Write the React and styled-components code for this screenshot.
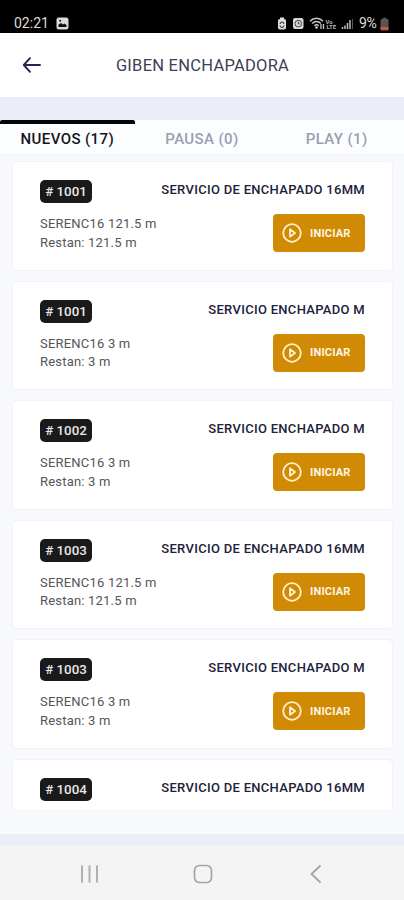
import React from 'react';
import styled, {createGlobalStyle} from 'styled-components';

const GlobalStyle = createGlobalStyle`
    * {
        box-sizing: border-box;
    }

    body {
        margin: 0;
        font-family: Roboto, "Liberation Sans", sans-serif;
    }
`;

const Screen = styled.div`
    display: flex;
    flex-direction: column;
    width: 404px;
    height: 900px;
    overflow: hidden;
    background: #f7f9fd;
`;

const StatusBar = styled.div`
    display: flex;
    flex: none;
    align-items: flex-end;
    justify-content: space-between;
    height: 33px;
    padding: 0 15px 2px 14px;
    background: #000;
    color: #dcdcdc;
`;

const StatusGroup = styled.div`
    display: flex;
    align-items: center;
    height: 15px;
`;

const Clock = styled.span`
    width: 42px;
    font-size: 14px;
    line-height: 15px;
    white-space: nowrap;
`;

const Battery = styled.span`
    margin: 0 2px 0 5px;
    width: 19px;
    font-size: 14px;
    line-height: 15px;
    letter-spacing: -0.4px;
`;

const Header = styled.header`
    display: grid;
    flex: none;
    grid-template-columns: 64px 1fr 64px;
    align-items: center;
    height: 64px;
    background: #fff;
`;

const Back = styled.button`
    display: flex;
    padding: 0 0 0 22px;
    border: 0;
    background: none;
`;

const Heading = styled.h1`
    margin: 0;
    padding: 2px 0 0 1px;
    color: #3d3f56;
    font-size: 16.5px;
    font-weight: 400;
    letter-spacing: 0.25px;
    line-height: 20px;
    text-align: center;
    white-space: nowrap;
`;

const Band = styled.div`
    flex: none;
    height: ${props => props.$height}px;
    background: #ebeef7;
`;

const Tabs = styled.nav`
    display: grid;
    flex: none;
    grid-template-columns: repeat(3, 1fr);
    height: 35px;
    background: #fcfdff;
    border-bottom: 1px solid #f1f3f7;
`;

const Tab = styled.div`
    display: flex;
    justify-content: center;
    padding-top: 5px;
    border-top: 4px solid ${props => props.$active ? '#050507' : 'transparent'};
    border-radius: 2px;
    color: ${props => props.$active ? '#15151c' : '#9a9eb1'};
    font-size: 15px;
    font-weight: 500;
    letter-spacing: 0.4px;
    line-height: 20px;
    white-space: nowrap;
`;

const List = styled.main`
    display: flex;
    flex: none;
    flex-direction: column;
    gap: 10px;
    height: 654px;
    padding: 6px 11px 0 12px;
    overflow: hidden;
`;

const Card = styled.article`
    display: flex;
    flex: none;
    flex-direction: column;
    height: 109.5px;
    padding: 18px 27px 0;
    border: 1px solid #f0f2f6;
    border-radius: 4px;
    background: #fff;
`;

const Row = styled.div`
    display: flex;
    justify-content: space-between;
`;

const Id = styled.span`
    width: 52px;
    height: 23px;
    border-radius: 5px;
    background: #1a1a1b;
    color: #e8e8e8;
    font-size: 13.3px;
    font-weight: 500;
    line-height: 24px;
    text-align: center;
    white-space: nowrap;
`;

const Name = styled.span`
    color: #20223a;
    font-size: 13px;
    font-weight: 500;
    letter-spacing: 0.3px;
    line-height: 20px;
    white-space: nowrap;
`;

const Details = styled.div`
    padding-top: 12px;
    color: #54555a;
    font-size: 13px;
    letter-spacing: 0.2px;
    line-height: 18.5px;
    white-space: nowrap;
`;

const StartButton = styled.button`
    display: flex;
    align-items: center;
    gap: 8px;
    width: 92px;
    height: 38px;
    margin-top: 11px;
    padding: 0 0 0 9px;
    border: 0;
    border-radius: 4px;
    background: #d18a04;
    color: #fff5e2;
    font-family: inherit;
    font-size: 11px;
    font-weight: 700;
    letter-spacing: 0.2px;
`;

const Spacer = styled.div`
    flex: 1;
`;

const NavBar = styled.footer`
    display: grid;
    flex: none;
    grid-template-columns: 113px 113px 114px;
    align-items: center;
    justify-content: center;
    justify-items: center;
    height: 54px;
    padding: 2px 0 0 2px;
    background: #f4f4f4;
`;

const PictureIcon = () => (
    <svg width="13" height="13" viewBox="0 0 13 13">
        <rect x="0.5" y="0.5" width="12" height="12" rx="2.5" fill="#dcdcdc"/>
        <path d="M2.5 10V7.6L5 6l2 1.6 1.6-1 2 1.6V10z" fill="#111"/>
        <circle cx="4.2" cy="3.8" r="1" fill="#111"/>
    </svg>
);

const StatusIcons = () => (
    <svg width="77" height="15" viewBox="0 0 77 15">
        {/* battery saver */}
        <path d="M3 3V1.5h4V3c1.5 0 2 .8 2 2v6.5c0 1.3-.6 2-2 2H3c-1.4 0-2-.7-2-2V5c0-1.2.6-2 2-2z" fill="#ddd"/>
        <path d="M3 8a2 2 0 0 1 4 0M7 9.5a2 2 0 0 1-4 0" fill="none" stroke="#222" strokeWidth="1"/>
        {/* alarm */}
        <rect x="16" y="2" width="10.5" height="11" rx="2" fill="#d8d8d8"/>
        <circle cx="21.3" cy="7.6" r="3.3" fill="none" stroke="#333" strokeWidth="0.9"/>
        <path d="M21.3 5.8v2h1.5" fill="none" stroke="#333" strokeWidth="0.9"/>
        {/* wifi */}
        <g fill="none" stroke="#c8c8c8" strokeWidth="1.4">
            <path d="M33 5.2c3.8-3.9 9.2-3.9 13 0"/>
            <path d="M35.2 7.5c2.500-2.600 6.100-2.600 8.600 0"/>
            <path d="M37.3 9.800c1.300-1.300 3.100-1.300 4.400 0"/>
        </g>
        <circle cx="39.5" cy="11.5" r="1.3" fill="#d0d0d0"/>
        <path d="M44 13V8M46.5 8v5" stroke="#c8c8c8" strokeWidth="1.3"/>
        <text x="48.5" y="7.6" fill="#b4b4b4" fontSize="6" fontWeight="700">Vo</text>
        <text x="49.5" y="13" fill="#b4b4b4" fontSize="6" fontWeight="700">LTE</text>
        {/* signal */}
        <path d="M65.5 13v-2M68 13V9.500M70.5 13V7M73 13V4" stroke="#bdbdbd" strokeWidth="1.5"/>
        <path d="M75.5 13V3" stroke="#555" strokeWidth="1"/>
    </svg>
);

const BatteryIcon = () => (
    <svg width="9" height="14" viewBox="0 0 9 14">
        <path d="M2.8 2V.8h3.4V2H7c1 0 1.5.5 1.5 1.5v8.300c0 1-.5 1.5-1.5 1.5H2c-1 0-1.5-.5-1.5-1.5V3.500C.5 2.500 1 2 2 2z" fill="#555"/>
        <path d="M.5 10h8v1.800c0 1-.5 1.500-1.500 1.500H2c-1 0-1.500-.5-1.500-1.500z" fill="#c9553d"/>
    </svg>
);

const ArrowIcon = () => (
    <svg width="20" height="18" viewBox="0 0 20 18" fill="none" stroke="#242650" strokeWidth="1.9" strokeLinecap="round" strokeLinejoin="round">
        <path d="M18 9H2M8 2.2L1.8 9 8 15.8"/>
    </svg>
);

const PlayIcon = () => (
    <svg width="20" height="20" viewBox="0 0 20 20" fill="none" stroke="#fff1cf" strokeWidth="1.8" strokeLinejoin="round">
        <circle cx="10" cy="10" r="8.8"/>
        <path d="M8 6.3v7.400l5-3.700z"/>
    </svg>
);

const RecentsIcon = () => (
    <svg width="19" height="20" viewBox="0 0 19 20" stroke="#b0b0b0" strokeWidth="2">
        <path d="M2 1.5v17M9.5 1.5v17M17 1.5v17"/>
    </svg>
);

const HomeIcon = () => (
    <svg width="20" height="20" viewBox="0 0 20 20" fill="none" stroke="#a5a5a5" strokeWidth="1.7">
        <rect x="1.5" y="1.5" width="17" height="17" rx="5"/>
    </svg>
);

const NavBackIcon = () => (
    <svg width="16" height="20" viewBox="0 0 16 20" fill="none" stroke="#a5a5a5" strokeWidth="1.8">
        <path d="M12.5 1.5L3.5 10l9 8.500"/>
    </svg>
);

const LONG = 'SERVICIO DE ENCHAPADO 16MM';
const SHORT = 'SERVICIO ENCHAPADO M';

const orders = [
    {id: 1001, name: LONG, amount: '121.5 m'},
    {id: 1001, name: SHORT, amount: '3 m'},
    {id: 1002, name: SHORT, amount: '3 m'},
    {id: 1003, name: LONG, amount: '121.5 m'},
    {id: 1003, name: SHORT, amount: '3 m'},
    {id: 1004, name: LONG},
];

const Order = ({id, name, amount}) => (
    <Card>
        <Row>
            <Id># {id}</Id>
            <Name>{name}</Name>
        </Row>
        {amount && (
            <Row>
                <Details>
                    <div>SERENC16 {amount}</div>
                    <div>Restan: {amount}</div>
                </Details>
                <StartButton>
                    <PlayIcon/>
                    INICIAR
                </StartButton>
            </Row>
        )}
    </Card>
);

export default function App() {
    return (
        <Screen>
            <GlobalStyle/>
            <StatusBar>
                <StatusGroup>
                    <Clock>02:21</Clock>
                    <PictureIcon/>
                </StatusGroup>
                <StatusGroup>
                    <StatusIcons/>
                    <Battery>9%</Battery>
                    <BatteryIcon/>
                </StatusGroup>
            </StatusBar>
            <Header>
                <Back aria-label="Volver"><ArrowIcon/></Back>
                <Heading>GIBEN ENCHAPADORA</Heading>
            </Header>
            <Band $height={23}/>
            <Tabs>
                <Tab $active>NUEVOS (17)</Tab>
                <Tab>PAUSA (0)</Tab>
                <Tab>PLAY (1)</Tab>
            </Tabs>
            <List>
                {orders.map((order, i) => <Order key={i} {...order}/>)}
            </List>
            <Spacer/>
            <Band $height={12}/>
            <NavBar>
                <RecentsIcon/>
                <HomeIcon/>
                <NavBackIcon/>
            </NavBar>
        </Screen>
    );
}
